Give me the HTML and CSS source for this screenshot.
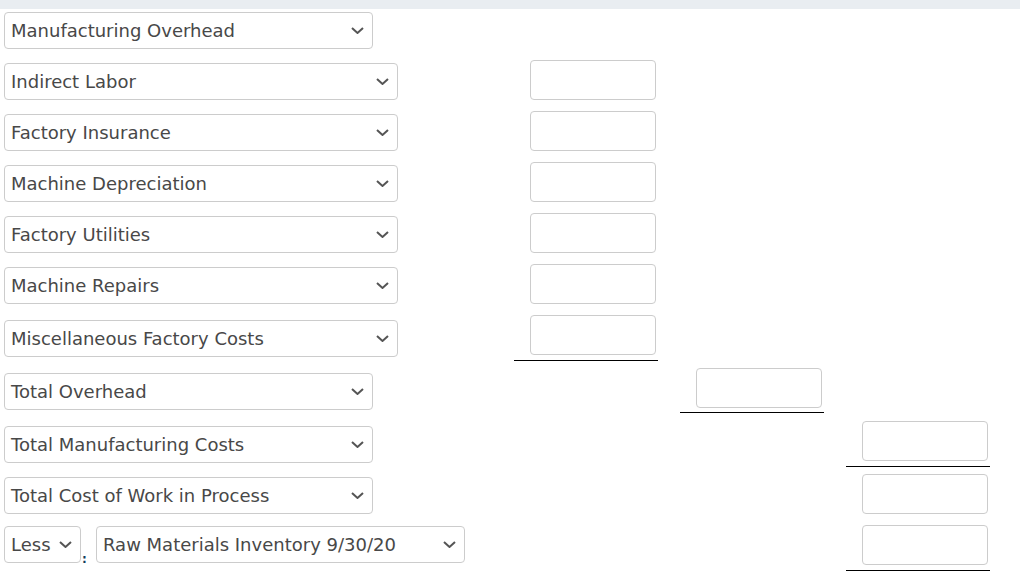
FILE: index.html
```html
<!DOCTYPE html>
<html>
<head>
<meta charset="utf-8">
<link rel="stylesheet" href="styles.css">
</head>
<body>
<div class="band"></div>
<div class="sheet">
  <div class="row r-head">
    <div class="lead"><div class="sel w369"><span>Manufacturing Overhead</span><svg class="chev" viewBox="0 0 13 7"><path d="M1 1 L6.5 6 L12 1"/></svg></div></div>
  </div>
  <div class="row r-std">
    <div class="lead mt3"><div class="sel w394"><span>Indirect Labor</span><svg class="chev" viewBox="0 0 13 7"><path d="M1 1 L6.5 6 L12 1"/></svg></div></div>
    <div class="cell c1"><div class="inp"></div></div>
  </div>
  <div class="row r-std">
    <div class="lead mt3"><div class="sel w394"><span>Factory Insurance</span><svg class="chev" viewBox="0 0 13 7"><path d="M1 1 L6.5 6 L12 1"/></svg></div></div>
    <div class="cell c1"><div class="inp"></div></div>
  </div>
  <div class="row r-std">
    <div class="lead mt3"><div class="sel w394"><span>Machine Depreciation</span><svg class="chev" viewBox="0 0 13 7"><path d="M1 1 L6.5 6 L12 1"/></svg></div></div>
    <div class="cell c1"><div class="inp"></div></div>
  </div>
  <div class="row r-std">
    <div class="lead mt3"><div class="sel w394"><span>Factory Utilities</span><svg class="chev" viewBox="0 0 13 7"><path d="M1 1 L6.5 6 L12 1"/></svg></div></div>
    <div class="cell c1"><div class="inp"></div></div>
  </div>
  <div class="row r-std">
    <div class="lead mt3"><div class="sel w394"><span>Machine Repairs</span><svg class="chev" viewBox="0 0 13 7"><path d="M1 1 L6.5 6 L12 1"/></svg></div></div>
    <div class="cell c1"><div class="inp"></div></div>
  </div>
  <div class="row r-tot">
    <div class="lead mt5"><div class="sel w394"><span>Miscellaneous Factory Costs</span><svg class="chev" viewBox="0 0 13 7"><path d="M1 1 L6.5 6 L12 1"/></svg></div></div>
    <div class="cell c1"><div class="inp"></div><div class="rule"></div></div>
  </div>
  <div class="row r-tot">
    <div class="lead mt5"><div class="sel w369"><span>Total Overhead</span><svg class="chev" viewBox="0 0 13 7"><path d="M1 1 L6.5 6 L12 1"/></svg></div></div>
    <div class="cell c2"><div class="inp"></div><div class="rule r4"></div></div>
  </div>
  <div class="row r-tot">
    <div class="lead mt5"><div class="sel w369"><span>Total Manufacturing Costs</span><svg class="chev" viewBox="0 0 13 7"><path d="M1 1 L6.5 6 L12 1"/></svg></div></div>
    <div class="cell c3"><div class="inp"></div><div class="rule"></div></div>
  </div>
  <div class="row r-std">
    <div class="lead mt3"><div class="sel w369"><span>Total Cost of Work in Process</span><svg class="chev" viewBox="0 0 13 7"><path d="M1 1 L6.5 6 L12 1"/></svg></div></div>
    <div class="cell c3"><div class="inp"></div></div>
  </div>
  <div class="row r-last">
    <div class="lead mt1 combo">
      <div class="sel w77"><span>Less</span><svg class="chev" viewBox="0 0 13 7"><path d="M1 1 L6.5 6 L12 1"/></svg></div>
      <span class="colon">:</span>
      <div class="sel w369"><span>Raw Materials Inventory 9/30/20</span><svg class="chev" viewBox="0 0 13 7"><path d="M1 1 L6.5 6 L12 1"/></svg></div>
    </div>
    <div class="cell c3"><div class="inp"></div><div class="rule"></div></div>
  </div>
</div>
</body>
</html>
```

FILE: styles.css
```css
html, body {
  margin: 0;
  padding: 0;
  background: #ffffff;
}
body {
  font-family: "DejaVu Sans", Verdana, sans-serif;
  color: #484848;
}
.band {
  height: 9px;
  background: #e9edf1;
}
.sheet {
  padding: 3px 0 0 4px;
}
.row {
  display: grid;
  grid-template-columns: 488px 144px 144px 144px;
  column-gap: 22px;
  align-items: start;
}
.r-head { height: 48px; }
.r-std { height: 51px; }
.r-tot { height: 53px; }
.r-last { height: 52px; }
.lead { grid-column: 1; }
.mt1 { margin-top: 1px; }
.mt3 { margin-top: 3px; }
.mt5 { margin-top: 5px; }
.combo {
  display: flex;
  align-items: flex-start;
}
.sel {
  box-sizing: border-box;
  height: 37px;
  border: 1px solid #cccccc;
  border-radius: 4px;
  background: #ffffff;
  display: flex;
  align-items: center;
  padding: 0 7px 0 6px;
  font-size: 18px;
  white-space: nowrap;
}
.sel span { flex: 1; }
.w369 { width: 369px; }
.w394 { width: 394px; }
.w77 { width: 77px; }
.chev {
  width: 13px;
  height: 7px;
  flex: none;
  margin-right: 1px;
}
.chev path {
  fill: none;
  stroke: #555555;
  stroke-width: 2;
}
.w77 .chev { margin-left: 4px; }
.colon {
  width: 15px;
  padding-left: 1px;
  box-sizing: border-box;
  align-self: flex-end;
  font-size: 12px;
  line-height: 12px;
  font-weight: bold;
  color: #123a5c;
  margin-bottom: -2px;
}
.cell {
  display: flex;
  flex-direction: column;
}
.c1 { grid-column: 2; }
.c2 { grid-column: 3; }
.c3 { grid-column: 4; }
.inp {
  box-sizing: border-box;
  margin-left: 16px;
  width: 126px;
  height: 40px;
  border: 1px solid #cccccc;
  border-radius: 4px;
  background: #ffffff;
}
.rule {
  margin-top: 5px;
  height: 1px;
  background: #000000;
}
.rule.r4 { margin-top: 4px; }
```
